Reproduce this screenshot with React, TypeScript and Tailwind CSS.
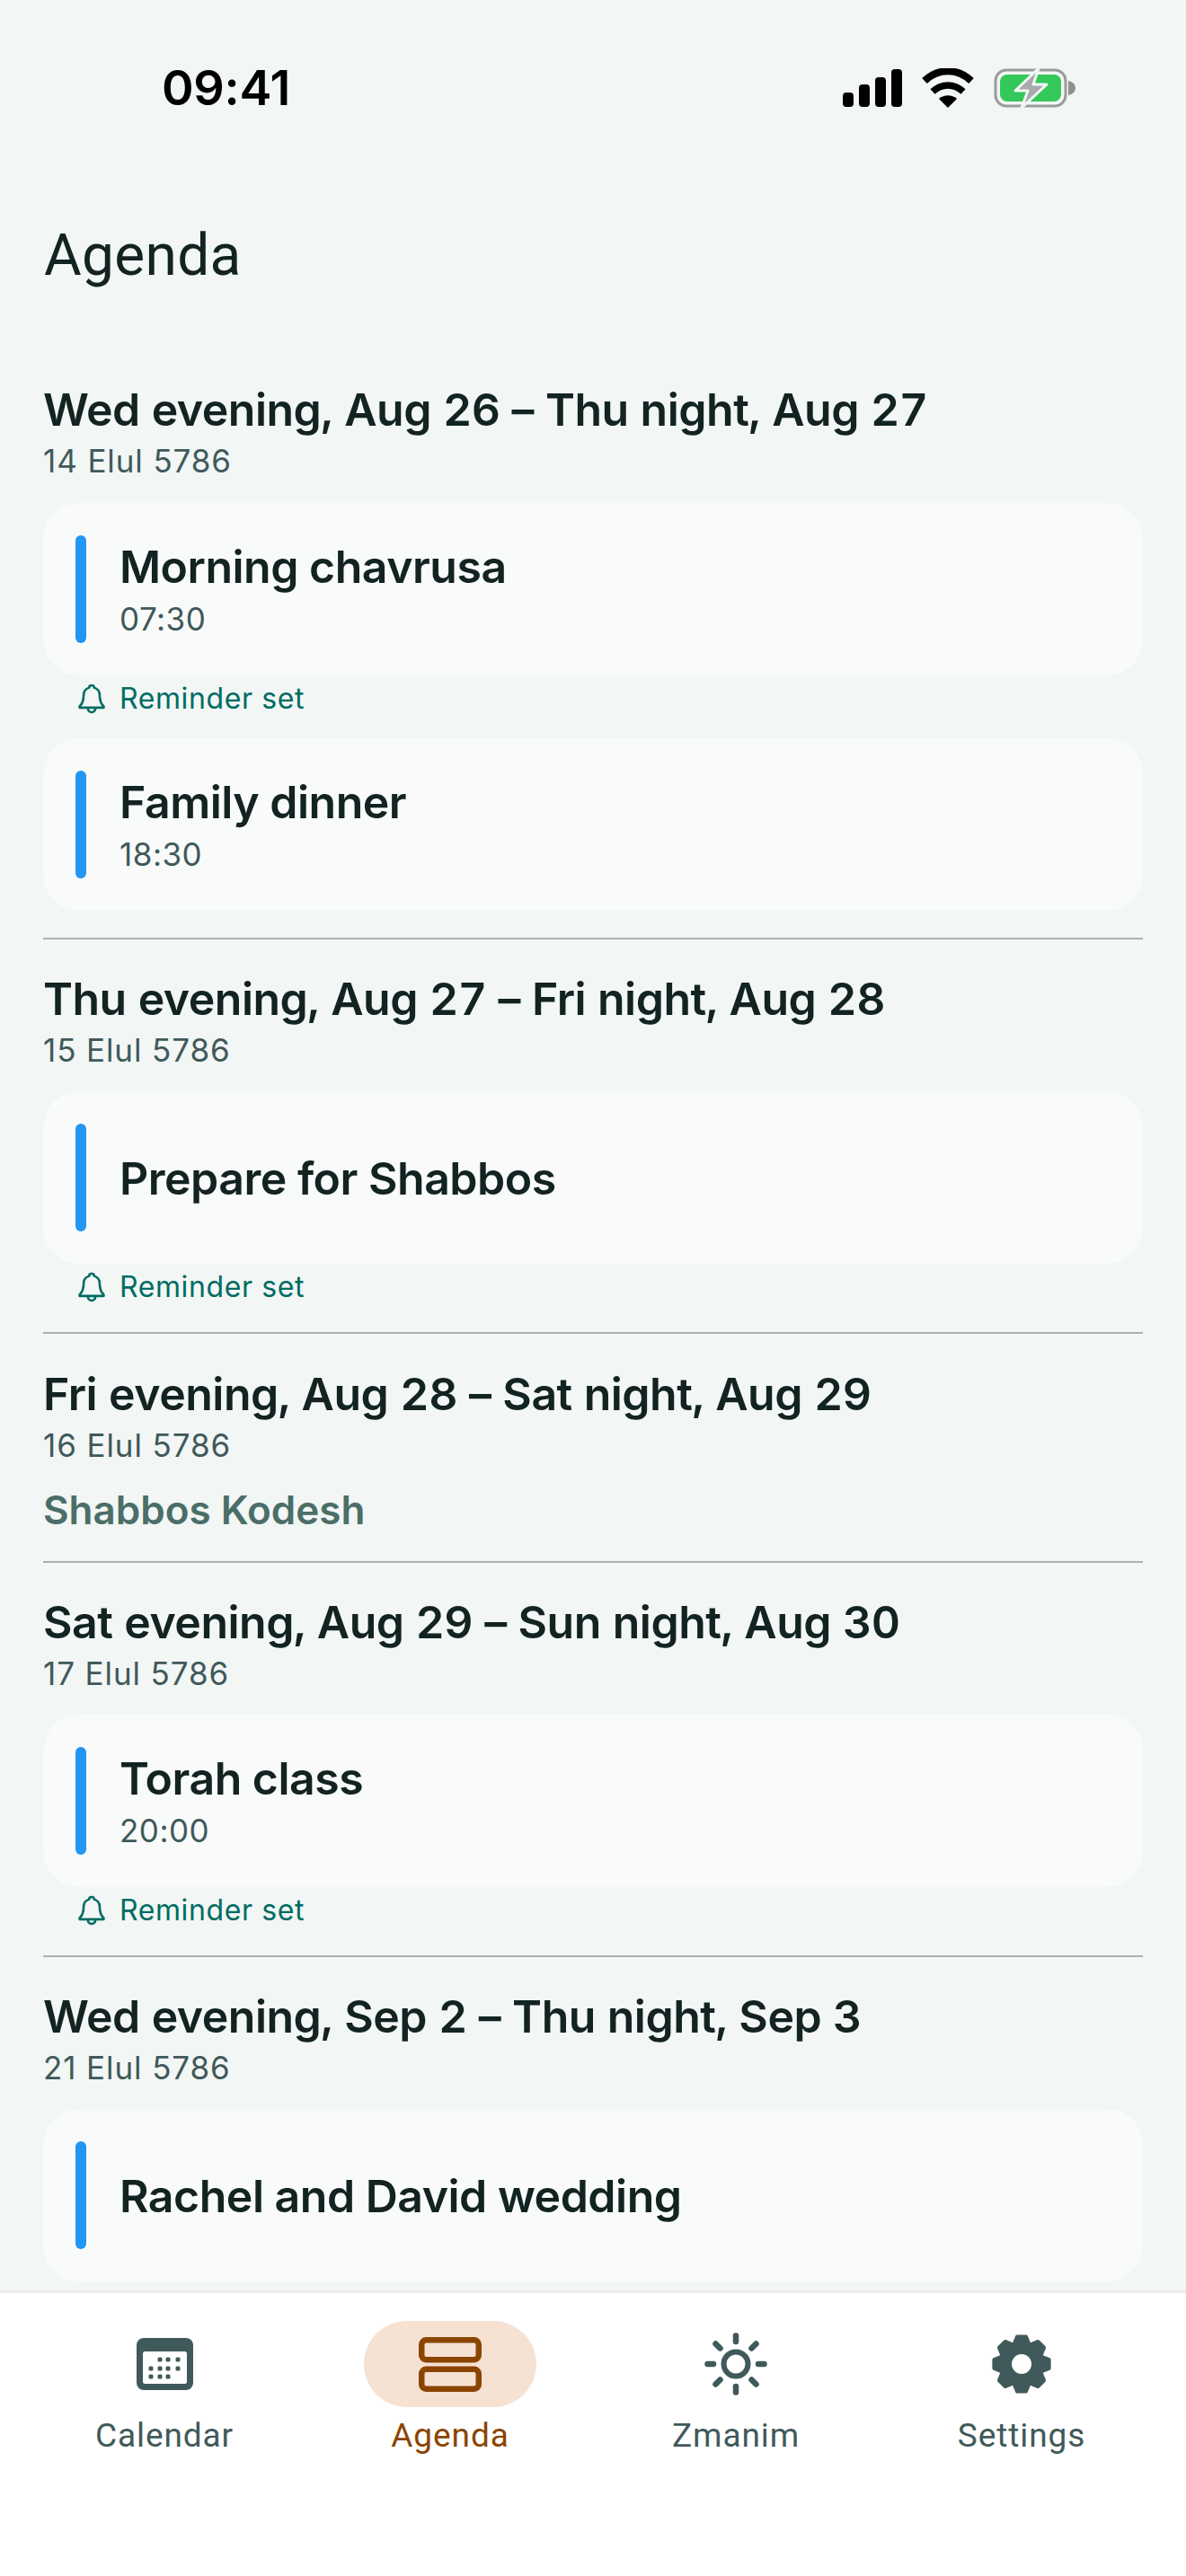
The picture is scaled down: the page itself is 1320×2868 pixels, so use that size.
import React from "react";

const Bell = () => (
  <svg width="30" height="34" viewBox="0 0 32 36" fill="none" stroke="#006c62" strokeWidth="2.8" strokeLinejoin="round" strokeLinecap="round" className="shrink-0">
    <path d="M16 2c-1.800 0-3 1.300-3 2.800C8.800 6.200 6.500 9.500 6.500 13.500c0 7.500-2 11-4.800 13.500v1.500h28.600V27c-2.800-2.500-4.800-6-4.800-13.500 0-4-2.300-7.300-6.500-8.700C19 3.300 17.800 2 16 2z" />
    <path d="M11.500 29c0 3 2 5 4.500 5s4.500-2 4.500-5" />
  </svg>
);

const Reminder = () => (
  <div className="flex items-center gap-[16px] pl-[39px] h-[52px] text-[32px] tracking-[0.6px] text-[#006c62]">
    <Bell />
    <span>Reminder set</span>
  </div>
);

const Card = ({ title, time }: { title: string; time?: string }) => (
  <div className="h-[192px] rounded-[40px] bg-[#f9fbfa] flex items-center pl-[36px]">
    <div className="w-[12px] h-[120px] rounded-[6px] bg-[#2196f3]" />
    <div className="ml-[37px] flex flex-col pt-[2px]">
      <div className="text-[50px] leading-[64px] tracking-[-0.5px] font-semibold text-[#122321]">{title}</div>
      {time && <div className="text-[35px] leading-[52px] text-[#40595a] tracking-[0.5px]">{time}</div>}
    </div>
  </div>
);

const Head = ({ title, sub }: { title: string; sub: string }) => (
  <div>
    <div className="text-[50px] leading-[64px] tracking-[-0.5px] font-semibold text-[#122321] tabular-nums">{title}</div>
    <div className="text-[35px] leading-[50px] text-[#40595a] tracking-[0.9px]">{sub}</div>
  </div>
);

const Divider = () => <div className="h-[2px] bg-[#a9b2b0]" />;

const Calendar = () => (
  <svg width="63" height="58" viewBox="0 0 63 58">
    <rect x="0" y="0" width="63" height="58" rx="8" fill="#40595a" />
    <rect x="7" y="15" width="49" height="36" rx="2.500" fill="#fff" />
    {[[26, 24], [35, 24], [46, 24], [16, 34], [26, 34], [35, 34], [46, 34], [16, 43], [26, 43], [35, 43]].map(([x, y]) => (
      <rect key={`${x}-${y}`} x={x - 2.500} y={y - 2.500} width="5" height="5" rx="1.500" fill="#40595a" />
    ))}
  </svg>
);

const AgendaIcon = () => (
  <svg width="70" height="61" viewBox="0 0 70 61" fill="none" stroke="#8b4500" strokeWidth="6.500">
    <rect x="3.250" y="3.250" width="63.500" height="22" rx="5" />
    <rect x="3.250" y="35.750" width="63.500" height="22" rx="5" />
  </svg>
);

const Sun = () => (
  <svg width="70" height="70" viewBox="0 0 70 70" fill="none" stroke="#40595a" strokeLinecap="round">
    <circle cx="35" cy="35" r="13.500" strokeWidth="6" />
    <g strokeWidth="6.500">
      <path d="M35 3.500v6.500M35 60v6.500M3.500 35H10M60 35h6.500M12.500 12.500l5 5M52.500 52.500l5 5M57.500 12.500l-5 5M17.500 52.500l-5 5" />
    </g>
  </svg>
);

const gearPath = (() => {
  const pts: string[] = [];
  const n = 8;
  for (let i = 0; i < n; i++) {
    const a = (i / n) * Math.PI * 2 - Math.PI / 2;
    const step = (Math.PI * 2) / n;
    const list: [number, number][] = [
      [a - step * 0.47, 23.5],
      [a - step * 0.2, 31],
      [a + step * 0.2, 31],
      [a + step * 0.47, 23.5],
    ];
    for (const [t, r] of list) pts.push(`${(33 + r * Math.cos(t)).toFixed(2)} ${(33 + r * Math.sin(t)).toFixed(2)}`);
  }
  return `M${pts.join("L")}Z`;
})();

const Gear = () => (
  <svg width="66" height="66" viewBox="0 0 66 66">
    <path d={gearPath} fill="#40595a" stroke="#40595a" strokeWidth="4" strokeLinejoin="round" />
    <circle cx="33" cy="33" r="11" fill="#fff" />
  </svg>
);

const Tab = ({ icon, label, active }: { icon: React.ReactNode; label: string; active?: boolean }) => (
  <div className="flex flex-col items-center">
    <div className={`w-[192px] h-[96px] rounded-[48px] flex items-center justify-center ${active ? "bg-[#f6e2d3]" : ""}`}>{icon}</div>
    <div className={`mt-[5px] text-[37px] leading-[54px] font-['Roboto',sans-serif] tracking-[0.9px] ${active ? "text-[#8b4500]" : "text-[#40595a]"}`}>{label}</div>
  </div>
);

export default function App() {
  return (
    <div className="w-[1320px] h-[2868px] bg-[#f2f6f5] flex flex-col overflow-hidden font-['Inter',sans-serif]">
      <div className="h-[2550px] shrink-0 overflow-hidden">
        <div className="h-[190px] flex items-start justify-between pt-[70px] pl-[180px] pr-[120px]">
          <div className="text-[54px] leading-[56px] font-semibold text-black tracking-[-0.3px]">09:41</div>
          <div className="flex items-center gap-[22px] pt-[5px]">
            <svg width="66" height="42" viewBox="0 0 66 42" fill="#000">
              <rect x="0" y="26" width="12" height="16" rx="4" />
              <rect x="18" y="17" width="12" height="25" rx="4" />
              <rect x="36" y="9" width="12" height="33" rx="4" />
              <rect x="54" y="0" width="12" height="42" rx="4" />
            </svg>
            <svg width="58" height="44" viewBox="0 0 58 44" fill="none">
              <path d="M29 44l-10-10c5.500-5 14.500-5 20 0z" fill="#000" />
              <path d="M12 26c10-9.500 24-9.500 34 0" stroke="#000" strokeWidth="7.500" />
              <path d="M3 14C18-.5 40-.5 55 14" stroke="#000" strokeWidth="8" />
            </svg>
            <svg width="94" height="46" viewBox="0 0 94 46" fill="none">
              <rect x="2" y="3" width="78" height="40" rx="12" stroke="#999c9b" strokeWidth="3" />
              <rect x="7" y="8" width="68" height="30" rx="8" fill="#34c759" />
              <path d="M83 15c5 1 8 4 8 8s-3 7-8 8z" fill="#8e9190" />
              <path d="M50 1L24 26h14l-7 19 28-26H44z" fill="#a8abaa" stroke="#f2f6f5" strokeWidth="3" strokeLinejoin="round" />
            </svg>
          </div>
        </div>
        <div className="pl-[49px] text-[64px] leading-[80px] text-[#122321] font-['Roboto',sans-serif] mt-[55px] tracking-[0.3px]">Agenda</div>
        <div className="px-[48px] mt-[99px] flex flex-col">
          <Head title="Wed evening, Aug 26 – Thu night, Aug 27" sub="14 Elul 5786" />
          <div className="mt-[22px]"><Card title="Morning chavrusa" time="07:30" /></div>
          <Reminder />
          <div className="mt-[18px]"><Card title="Family dinner" time="18:30" /></div>
          <div className="mt-[30px]"><Divider /></div>
          <div className="mt-[34px]"><Head title="Thu evening, Aug 27 – Fri night, Aug 28" sub="15 Elul 5786" /></div>
          <div className="mt-[21px]"><Card title="Prepare for Shabbos" /></div>
          <Reminder />
          <div className="mt-[24px]"><Divider /></div>
          <div className="mt-[35px]"><Head title="Fri evening, Aug 28 – Sat night, Aug 29" sub="16 Elul 5786" /></div>
          <div className="mt-[18px] text-[44px] leading-[58px] font-semibold text-[#4b6e68]">Shabbos Kodesh</div>
          <div className="mt-[28px]"><Divider /></div>
          <div className="mt-[34px]"><Head title="Sat evening, Aug 29 – Sun night, Aug 30" sub="17 Elul 5786" /></div>
          <div className="mt-[21px]"><Card title="Torah class" time="20:00" /></div>
          <Reminder />
          <div className="mt-[24px]"><Divider /></div>
          <div className="mt-[34px]"><Head title="Wed evening, Sep 2 – Thu night, Sep 3" sub="21 Elul 5786" /></div>
          <div className="mt-[21px]"><Card title="Rachel and David wedding" /></div>
        </div>
      </div>
      <div className="flex-1 bg-white border-t-[3px] border-[#ebeded] px-[24px] pt-[31px] grid grid-cols-4 content-start justify-items-center">
        <Tab icon={<Calendar />} label="Calendar" />
        <Tab icon={<AgendaIcon />} label="Agenda" active />
        <Tab icon={<Sun />} label="Zmanim" />
        <Tab icon={<Gear />} label="Settings" />
      </div>
    </div>
  );
}
